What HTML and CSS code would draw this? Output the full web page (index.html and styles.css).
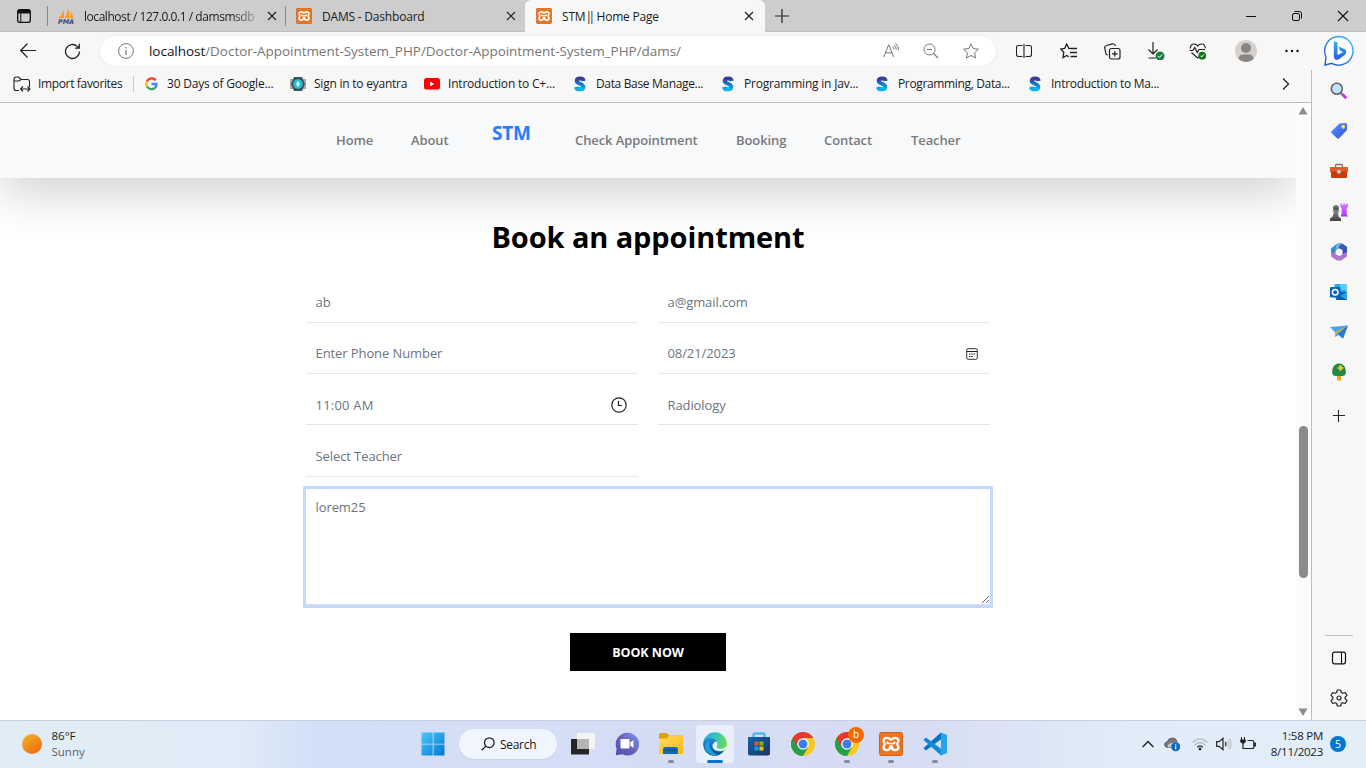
FILE: index.html
```html
<!DOCTYPE html>
<html lang="en">
<head>
<meta charset="utf-8">
<title>STM|| Home Page</title>
<link rel="stylesheet" href="styles.css">
</head>
<body>
<svg class="defs" width="0" height="0" aria-hidden="true">
  <defs>
    <linearGradient id="gS" x1="0" y1="0" x2="0" y2="1"><stop offset="0" stop-color="#3a3a9c"/><stop offset=".5" stop-color="#1478c8"/><stop offset="1" stop-color="#00b4f0"/></linearGradient>
    <linearGradient id="gBing" x1="1" y1="0" x2="0" y2="1"><stop offset="0" stop-color="#35c4f0"/><stop offset="1" stop-color="#2450d8"/></linearGradient>
    <linearGradient id="gB" x1="0" y1="0" x2="0" y2="1"><stop offset="0" stop-color="#2fb8f2"/><stop offset="1" stop-color="#2a58e6"/></linearGradient>
    <linearGradient id="gSun" x1="0" y1="0" x2=".7" y2="1"><stop offset="0" stop-color="#f0b92e"/><stop offset="1" stop-color="#f26a0c"/></linearGradient>
    <linearGradient id="gWin" x1="0" y1="0" x2="1" y2="1"><stop offset="0" stop-color="#4cc8f8"/><stop offset="1" stop-color="#0078d0"/></linearGradient>
    <linearGradient id="gChat" x1="0" y1="1" x2="1" y2="0"><stop offset="0" stop-color="#4c4eb0"/><stop offset=".5" stop-color="#6b60bd"/><stop offset="1" stop-color="#7a9af0"/></linearGradient>
    <linearGradient id="gFold" x1="0" y1="0" x2="1" y2="1"><stop offset="0" stop-color="#ffdc62"/><stop offset="1" stop-color="#fbb80c"/></linearGradient>
    <linearGradient id="gEdgeA" x1="0" y1="0" x2="1" y2=".3"><stop offset="0" stop-color="#2aa6dc"/><stop offset=".55" stop-color="#35c2c0"/><stop offset="1" stop-color="#6bdc50"/></linearGradient>
    <linearGradient id="gEdgeB" x1="0" y1="0" x2="0" y2="1"><stop offset="0" stop-color="#1c8fd6"/><stop offset="1" stop-color="#0c4a94"/></linearGradient>
    <linearGradient id="gStore" x1="0" y1="0" x2="1" y2="1"><stop offset="0" stop-color="#1265ad"/><stop offset="1" stop-color="#1d3362"/></linearGradient>
    <linearGradient id="gTag" x1="0" y1="0" x2="1" y2="1"><stop offset="0" stop-color="#5a96ff"/><stop offset="1" stop-color="#2f50dc"/></linearGradient>
    <linearGradient id="gGrey" x1="0" y1="0" x2="0" y2="1"><stop offset="0" stop-color="#888"/><stop offset="1" stop-color="#404040"/></linearGradient>
    <linearGradient id="gRook" x1="0" y1="0" x2="0" y2="1"><stop offset="0" stop-color="#d77cff"/><stop offset="1" stop-color="#a838f0"/></linearGradient>
    <symbol id="close" viewBox="0 0 10 10"><path d="M1 1l8 8M9 1l-8 8" stroke="#222" stroke-width="1.2" fill="none"/></symbol>
    <symbol id="xampp" viewBox="0 0 24 24"><rect x=".5" y=".5" width="23" height="23" rx="2" fill="#ee7422" stroke="#c9601c"/><path d="M8 5.800c2.400 0 2.700 1.700 4 1.700s1.600-1.700 4-1.700c2.100 0 3.400 1.500 3.400 3.200 0 1.500-1.300 2-1.300 3s1.300 1.500 1.300 3c0 1.800-1.300 3.200-3.400 3.200-3 0-3-1.900-3-3.200 0-.8-.4-1.200-1-1.200s-1 .4-1 1.200c0 1.300 0 3.200-3 3.200-2.100 0-3.400-1.400-3.400-3.200 0-1.500 1.300-2 1.300-3S4.600 10.500 4.600 9c0-1.700 1.300-3.200 3.400-3.200z" fill="none" stroke="#fff" stroke-width="2.300"/><path d="M8.500 9.500v2h7v-2" fill="none" stroke="#fff" stroke-width="1.600"/></symbol>
    <symbol id="skill" viewBox="0 0 12 16"><path d="M9.700 5C9.300 1.900 3 1.700 2.700 4.900 2.500 8.200 9.400 7.300 9.300 11 9.200 14.300 2.600 14 2 11" fill="none" stroke="url(#gS)" stroke-width="4"/></symbol>
    <symbol id="chrome" viewBox="0 0 24 24"><circle cx="12" cy="12" r="12" fill="#fbc81e"/><path d="M1.600 6A12 12 0 0 0 12 24l5.200-9L12 12z" fill="#25a04a"/><path d="M1.600 6A12 12 0 0 1 22.400 6H12l-5.200 9z" fill="#e23b30"/><circle cx="12" cy="12" r="5.800" fill="#fff"/><circle cx="12" cy="12" r="4.500" fill="#3b7ded"/></symbol>
  </defs>
</svg>
<div class="screen">
  <header class="tabs">
    <div class="tab-menu"><svg width="16" height="16" viewBox="0 0 16 16"><rect x="1.700" y="1.700" width="12.600" height="12.600" rx="2" fill="none" stroke="#111" stroke-width="1.300"/><path d="M2 2h12v3.500H2z" fill="#111"/><path d="M4.800 5v9" stroke="#111"/></svg></div>
    <div class="tab tab-sep">
      <svg width="16" height="16" viewBox="0 0 16 16"><path d="M0 10Q4 8 5.500 2q1 4 .5 8zM6.500 10Q10 5 9.500 0q3 5 1.500 10zM11.500 10q1.500-3 .8-7Q15 6 15.500 10z" fill="#f59d2c"/><text class="pma" x="0" y="15.500" textLength="16">PMA</text></svg>
      <span class="tab-label t1">localhost / 127.0.0.1 / damsmsdb</span>
      <svg width="10" height="10"><use href="#close"/></svg>
    </div>
    <div class="tab tab-sep tab-two">
      <svg width="16" height="16"><use href="#xampp"/></svg>
      <span class="tab-label t2">DAMS - Dashboard</span>
      <svg width="10" height="10"><use href="#close"/></svg>
    </div>
    <div class="tab active">
      <svg width="16" height="16"><use href="#xampp"/></svg>
      <span class="tab-label t3">STM<span class="bars">||</span> Home Page</span>
      <svg width="10" height="10"><use href="#close"/></svg>
    </div>
    <svg class="new-tab" width="14" height="14" viewBox="0 0 14 14"><path d="M7 0v14M0 7h14" stroke="#222" stroke-width="1.200"/></svg>
    <div class="window-buttons">
      <svg width="12" height="12" viewBox="0 0 12 12"><path d="M1 6.500h10" stroke="#111"/></svg>
      <svg width="12" height="12" viewBox="0 0 12 12"><rect x="1.500" y="3.500" width="7" height="7" rx="1.500" fill="none" stroke="#111"/><path d="M3.500 1.500h5q2 0 2 2v5" fill="none" stroke="#111"/></svg>
      <svg width="12" height="12" viewBox="0 0 12 12"><path d="M1 1l10 10M11 1L1 11" stroke="#111" stroke-width="1.100"/></svg>
    </div>
  </header>

  <div class="toolbar">
    <svg class="back" width="16" height="16" viewBox="0 0 16 16"><path d="M16 7.500H.8M7.500.5L.7 7.500l6.800 7" fill="none" stroke="#222" stroke-width="1.200"/></svg>
    <svg class="reload" width="17" height="17" viewBox="0 0 17 17"><path d="M15.500 8.500a7 7 0 1 1-2.200-5.100L15 5M15.300.8V5.200H11" fill="none" stroke="#222" stroke-width="1.300"/></svg>
    <div class="address">
      <svg class="info" width="16" height="16" viewBox="0 0 16 16"><circle cx="8" cy="8" r="7.400" fill="none" stroke="#777"/><path d="M8 7v5M8 4v1.500" stroke="#777" stroke-width="1.200"/></svg>
      <span class="url"><b>localhost</b>/Doctor-Appointment-System_PHP/Doctor-Appointment-System_PHP/dams/</span>
      <div class="address-icons">
        <svg width="16" height="16" viewBox="0 0 16 16"><path d="M.7 14L5.500 2h.6L10.500 14M2.500 9.800h6.500M9.500 3.500q1.500 1.200 1.500 3M11 1.800q2.300 2 2.300 5M12.500.3Q15.500 3 15.500 7" fill="none" stroke="#777"/></svg>
        <svg width="16" height="16" viewBox="0 0 16 16"><circle cx="6.500" cy="6.500" r="5.500" fill="none" stroke="#777"/><path d="M4 6.500h5M10.500 10.500l4.500 4.500" stroke="#777" stroke-width="1.100"/></svg>
        <svg width="16" height="16" viewBox="0 0 16 16"><path d="M8 .8l2.200 4.700 5.200.7-3.800 3.600 1 5.200L8 12.500 3.400 15l1-5.200L.6 6.200l5.200-.7z" fill="none" stroke="#777"/></svg>
      </div>
    </div>
    <div class="tools">
      <svg width="16" height="16" viewBox="0 0 16 16"><path d="M6.500 2.500h-4q-2 0-2 2v7q0 2 2 2h4M9.500 2.500h4q2 0 2 2v7q0 2-2 2h-4M8 1v14" fill="none" stroke="#222" stroke-width="1.100"/></svg>
      <svg width="17" height="16" viewBox="0 0 17 16"><path d="M11 5.600L8.800 5.300 6.700 1 4.700 5.300.6 6l3.200 3.200L3 14.600l3.800-2.100 2 1.300M9.500 5.500H17M10 9.500h7M10.500 13.500H17" fill="none" stroke="#222" stroke-width="1.300"/></svg>
      <svg class="collections" width="17" height="17" viewBox="0 0 17 17"><rect x="5.500" y="5.500" width="10.500" height="10.500" rx="2" fill="none" stroke="#222" stroke-width="1.200"/><path d="M10.800 8v5.600M8 10.800h5.600M3.800 12Q2 12 1.800 10L.7 5Q.5 3 2.500 2.500L8.500.8q2.200-.4 3 2.200" fill="none" stroke="#222" stroke-width="1.200"/></svg>
      <svg class="download" width="18" height="18" viewBox="0 0 18 18"><path d="M6 0v12M1.500 7.500L6 12l4.500-4.500M1.500 16H9" fill="none" stroke="#222" stroke-width="1.200"/><circle cx="13" cy="14" r="4.500" fill="#1e8040"/><path d="M11 14l1.500 1.500 2.500-3" fill="none" stroke="#fff"/></svg>
      <svg width="18" height="17" viewBox="0 0 18 17"><path d="M1.300 5.500Q1.500 1 5 1q2.500 0 3.700 2Q10 1 12.600 1q3.400 0 3.700 4.200M.5 7.500H4l1.800-3L8.200 9.500 10 6.500h6M2.500 9.500l6 5.500 1.500-1.200" fill="none" stroke="#222" stroke-width="1.200"/><circle cx="13.200" cy="12.700" r="3.900" fill="#127a12"/><path d="M11.500 12.700l1.200 1.300 2.300-2.500" fill="none" stroke="#fff"/></svg>
      <svg width="22" height="22" viewBox="0 0 22 22"><circle cx="11" cy="11" r="11" fill="#d4d1ce"/><circle cx="11" cy="8" r="5" fill="#8a8580"/><path d="M3.500 19Q4 14.500 8 14.500h6q4 0 4.500 4.500A11 11 0 0 1 3.500 19z" fill="#8a8580"/></svg>
      <svg width="16" height="4" viewBox="0 0 16 4"><circle cx="2.500" cy="2" r="1.200" fill="#111"/><circle cx="8" cy="2" r="1.200" fill="#111"/><circle cx="13.500" cy="2" r="1.200" fill="#111"/></svg>
    </div>
    <svg class="bing" width="32" height="32" viewBox="0 0 32 32"><path d="M16 1.500a14.300 14.300 0 1 1-7.200 26.800L2 30l1-8.200A14.300 14.300 0 0 1 16 1.500z" fill="#fff" stroke="url(#gBing)" stroke-width="1.400"/><path d="M10.800 6l3.700 1.500V20L20 17.300l-3-1.700-1.500-4 6 2.500q2.500 1.300 1.500 4-.5 1.600-2 2.500l-5.500 3.800q-1.700.8-3.200 0-1.500-.8-1.500-2.800z" fill="url(#gB)"/></svg>
  </div>

  <div class="middle">
    <div class="main">
      <div class="bookmarks">
        <div class="bm bm-import"><svg width="18" height="16" viewBox="0 0 18 16"><path d="M6 14.500H3q-2 0-2-2v-9Q1 1 3 1h2.500L8 3.500h6.500q2 0 2 2V11M1 5h5l2-1.500M7.500 13h9.500M10 10.500L7.500 13l2.500 2.500M14.500 10.500L17 13l-2.500 2.500" fill="none" stroke="#222" stroke-width="1.100"/></svg><span>Import favorites</span></div>
        <div class="bm bm-google"><svg width="13" height="14" viewBox="0 0 13 14"><path d="M10.800 3.300A5.200 5.200 0 0 0 2 4.500" stroke="#ea4335" stroke-width="2.300" fill="none"/><path d="M2 4.500a5.300 5.300 0 0 0 0 5" stroke="#fbbc05" stroke-width="2.300" fill="none"/><path d="M2 9.500a5.200 5.200 0 0 0 8 1.300" stroke="#34a853" stroke-width="2.300" fill="none"/><path d="M6.500 7h5q0 2.400-1.700 4" stroke="#4285f4" stroke-width="2.300" fill="none"/></svg><span>30 Days of Google...</span></div>
        <div class="bm bm-yantra"><svg width="16" height="16" viewBox="0 0 16 16"><path d="M0 3h16v10H0z" fill="#aaa"/><path d="M4 1h8l3 7-3 7H4L1 8z" fill="#3e5159"/><circle cx="8" cy="8" r="4.800" fill="#29bbdc"/><path d="M8 4.500L6 8l2 3.500L10 8z" fill="#c6f2fa"/></svg><span>Sign in to eyantra</span></div>
        <div class="bm bm-youtube"><svg width="16" height="12" viewBox="0 0 16 12"><rect width="16" height="11.500" rx="2.500" fill="#f00"/><path d="M6.200 3.500v4.800l4.200-2.400z" fill="#fff"/></svg><span>Introduction to C+...</span></div>
        <div class="bm bm-data"><svg width="12" height="16"><use href="#skill"/></svg><span>Data Base Manage...</span></div>
        <div class="bm bm-java"><svg width="12" height="16"><use href="#skill"/></svg><span>Programming in Jav...</span></div>
        <div class="bm bm-prog"><svg width="12" height="16"><use href="#skill"/></svg><span>Programming, Data...</span></div>
        <div class="bm bm-intro"><svg width="12" height="16"><use href="#skill"/></svg><span>Introduction to Ma...</span></div>
        <svg class="more" width="8" height="12" viewBox="0 0 8 12"><path d="M1 .5L6.500 6 1 11.500" fill="none" stroke="#222" stroke-width="1.300"/></svg>
      </div>
      <div class="viewport">
        <div class="page">
          <nav class="nav">
            <a class="n1">Home</a><a class="n2">About</a><a class="brand">STM</a><a class="n3">Check Appointment</a><a class="n4">Booking</a><a class="n5">Contact</a><a class="n6">Teacher</a>
          </nav>
          <section class="booking">
            <h1>Book an appointment</h1>
            <div class="fields">
              <div class="field"><span>ab</span></div>
              <div class="field"><span>a@gmail.com</span></div>
              <div class="field"><span>Enter Phone Number</span></div>
              <div class="field"><span>08/21/2023</span><svg class="date-icon" width="12" height="12" viewBox="0 0 12 12"><rect x=".7" y=".7" width="10.600" height="10.600" rx="1.500" fill="none" stroke="#333"/><path d="M1 3.500h10" stroke="#222"/><path d="M3 6h6.500M3 8.500h4" stroke="#222" stroke-width="1.200" stroke-dasharray="1.500 .7"/></svg></div>
              <div class="field lower"><span class="time">11:00 AM</span><svg class="time-icon" width="16" height="16" viewBox="0 0 16 16"><circle cx="8" cy="8" r="7.200" fill="none" stroke="#222" stroke-width="1.200"/><path d="M7.500 4v4.500H11" fill="none" stroke="#222" stroke-width="1.200"/></svg></div>
              <div class="field lower"><span>Radiology</span></div>
              <div class="field"><span>Select Teacher</span></div>
            </div>
            <textarea class="message" spellcheck="false">lorem25</textarea>
            <button class="submit">BOOK NOW</button>
          </section>
        </div>
        <div class="scrollbar">
          <svg width="10" height="8" viewBox="0 0 10 8"><path d="M5 0l4.500 7.500h-9z" fill="#8b8b8b"/></svg>
          <div class="thumb"></div>
          <svg width="10" height="8" viewBox="0 0 10 8"><path d="M5 8L.5 .5h9z" fill="#8b8b8b"/></svg>
        </div>
      </div>
    </div>
    <aside class="sidebar">
      <div class="slot"><svg width="18" height="18" viewBox="0 0 18 18"><path d="M10.500 10.500L13 13" stroke="#777" stroke-width="2"/><path d="M12.300 12.300l4 4" stroke="#c33bf0" stroke-width="3"/><circle cx="6.800" cy="6.800" r="5.500" fill="#bfe4fb" stroke="#666" stroke-width="1.600"/></svg></div>
      <div class="slot"><svg width="18" height="18" viewBox="0 0 18 18"><path d="M9.500 1.500l6-.5q1.500 0 1.500 1.500V8L8.800 16.500Q8 17 7 16.200L1.500 11Q.8 10 1.500 9.200z" fill="url(#gTag)"/><circle cx="13.200" cy="4.800" r="1.400" fill="#fff" stroke="#fbcf3c" stroke-width="1.200"/></svg></div>
      <div class="slot"><svg width="18" height="18" viewBox="0 0 18 18"><path d="M5.500 6V3.500q0-1 1-1h5q1 0 1 1V6" fill="none" stroke="#777" stroke-width="1.300"/><path d="M0 5h18v5H0z" fill="#e45a24"/><path d="M1 9.500h16V15q0 1-1 1H2q-1 0-1-1z" fill="#c43c0c"/><circle cx="9" cy="9.700" r="2" fill="#ccc"/></svg></div>
      <div class="slot"><svg width="18" height="18" viewBox="0 0 18 18"><path d="M10.300.5h1.700v1.500h1.200V.5h1.800v1.500h1.200V.5H18V4l-1.300 1v6l1.300 2.500h-7.500L11.600 11V5l-1.300-1z" fill="url(#gRook)"/><circle cx="6" cy="5" r="3" fill="url(#gGrey)"/><path d="M2.800 7.500h6.400v1.500H8l.5 4.500 2.500 2v2.500H0V15.500l2.700-2L4 9H2.800z" fill="url(#gGrey)"/></svg></div>
      <div class="slot"><svg width="18" height="18" viewBox="0 0 18 18"><path d="M1 5.500L6 1.500 11.500 1 8.500 5.500 5.500 8v4L1 13z" fill="#3f87ce"/><path d="M6 1.500L8 .5h4l5 3.300V13l-4.500-2V7L8 5z" fill="#3a55ba"/><path d="M1 8.500l5 3 3.500 1.500L17 9v4.500l-6 4H7l-6-4z" fill="#ae77cf"/><path d="M6 1.500Q8 .3 11 .8L8 5.500 5.500 7z" fill="#61b9e5"/><path d="M9 5.500L12 7.200v3.600L9 12.500l-3-1.700V7.200z" fill="#f7f7f7"/></svg></div>
      <div class="slot"><svg width="18" height="18" viewBox="0 0 18 18"><rect x="4.500" y="1" width="12" height="14" rx="1" fill="#28a8e8"/><path d="M10 1h6.500v6H10z" fill="#50d0f8"/><path d="M7 9h10v8H6z" fill="#0b5fb0"/><path d="M17 9v8l-7-4z" fill="#2ba4e6"/><rect x="0" y="4" width="10.500" height="10.500" rx="1" fill="#0868b8"/><circle cx="5.200" cy="9.200" r="2.800" fill="none" stroke="#fff" stroke-width="1.500"/></svg></div>
      <div class="slot"><svg width="18" height="18" viewBox="0 0 18 18"><path d="M0 4l18-1.500-5 13L8.500 12 5 14V9z" fill="#42a6ef"/><path d="M18 2.500L5 9v5l1.500-3.500z" fill="#f6aa24"/><path d="M18 2.500l-5 13-5-4.500z" fill="#247cd2"/></svg></div>
      <div class="slot"><svg width="18" height="18" viewBox="0 0 18 18"><path d="M7 12h4v5.500H7z" fill="#f3a61e"/><path d="M9 .5q5 0 6.500 5.500 1.500 7-3 7h-7q-4.500 0-3-7Q4 .5 9 .5z" fill="#238a45"/><path d="M10.500 2v6M7.500 5h6" stroke="#f9c82f" stroke-width="1.500"/><circle cx="10.500" cy="5" r="1.900" fill="#f9c82f"/></svg></div>
      <div class="slot plus"><svg width="12" height="12" viewBox="0 0 12 12"><path d="M5.500 0v12M0 5.500h12" stroke="#222" stroke-width="1.100"/></svg></div>
      <div class="side-bottom">
        <div class="slot"><svg width="16" height="14" viewBox="0 0 16 14"><rect x="1.500" y="1.200" width="13" height="11.600" rx="2" fill="none" stroke="#111" stroke-width="1.200"/><path d="M10.500 1v12" stroke="#111" stroke-width="1.100"/></svg></div>
        <div class="slot"><svg width="18" height="18" viewBox="0 0 18 18"><path d="M7.300 1h3.400l.6 2.500 1.500.8 2.400-.8L17 6.400l-1.900 1.800v1.600L17 11.600l-1.800 2.900-2.400-.8-1.500.8-.6 2.500H7.300l-.6-2.500-1.500-.8-2.400.8L1 11.600l1.900-1.800V8.200L1 6.400l1.800-2.900 2.400.8 1.500-.8z" fill="none" stroke="#222" stroke-width="1.200" stroke-linejoin="round"/><circle cx="9" cy="9" r="2" fill="none" stroke="#222" stroke-width="1.200"/></svg></div>
      </div>
    </aside>
  </div>

  <footer class="taskbar">
    <div class="weather"><svg width="20" height="20" viewBox="0 0 20 20"><circle cx="10" cy="10" r="10" fill="url(#gSun)"/></svg><div class="weather-text"><span class="w1">86°F</span><span class="w2">Sunny</span></div></div>
    <div class="apps">
      <div class="app start"><svg width="24" height="24" viewBox="0 0 24 24"><path d="M.5.5h11.200v11.200H.5zM12.500.5h11v11.200h-11zM.5 12.500h11.200v11H.5zM12.500 12.500h11v11h-11z" fill="url(#gWin)"/></svg></div>
      <div class="search"><svg width="14" height="14" viewBox="0 0 14 14"><circle cx="8.300" cy="5.700" r="4.800" fill="none" stroke="#222" stroke-width="1.300"/><path d="M4.900 9.100L.7 13.300" stroke="#222" stroke-width="1.300"/></svg><span>Search</span></div>
      <div class="app taskview"><svg width="24" height="24" viewBox="0 0 24 24"><path d="M6 1h18v16H6z" fill="#f4f4f4"/><path d="M0 7h18v15.500H0z" fill="#252525"/><path d="M6 7h12v10H6z" fill="#b5b5b5"/></svg></div>
      <div class="app"><svg width="24" height="24" viewBox="0 0 24 24"><path d="M12 .8A11.400 11.400 0 1 1 7.500 22.300L.8 23.200l.8-6.500A11.400 11.400 0 0 1 12 .8z" fill="url(#gChat)"/><rect x="5.500" y="7" width="9" height="9.500" rx="1" fill="#fff"/><path d="M15.200 10.500L18.500 8v8l-3.300-2.500z" fill="#fff"/></svg></div>
      <div class="app dot"><svg width="24" height="24" viewBox="0 0 24 24"><path d="M0 2.500Q0 1 1.500 1H8l2 2.500h13q1 0 1 1V8H0z" fill="#e0a008"/><path d="M0 6.500h8l2-3h14V22H0z" fill="url(#gFold)"/><path d="M4 22v-5q0-2 2-2h11q2 0 2 2v5z" fill="#0f6cbd"/><path d="M6 17.500h11v1.200H6z" fill="#0a4a90"/></svg></div>
      <div class="app current"><svg width="24" height="24" viewBox="0 0 24 24"><circle cx="12" cy="12" r="11.800" fill="url(#gEdgeA)"/><path d="M.2 12q1-5.700 7-5.800 5.300.1 6.300 4.200Q8.500 10.500 9.500 15q2 6 11.500 3.500Q17 24 11 23.800 1 23 .2 12z" fill="url(#gEdgeB)"/><path d="M2 17Q.5 10.500 7 8q-2 6 1.500 10.500Q11 22 15 23 7 25 2 17z" fill="#1aa0dc"/><path d="M13 9.500q2.500 1.500 1 4.300-1 2 1.500 2.800 4 1 8-2l.5 1.700Q22 19 17.500 19.200 10 19 9.500 14 9.500 11 13 9.500z" fill="#eaf0fa"/></svg></div>
      <div class="app"><svg width="24" height="24" viewBox="0 0 24 24"><path d="M6.500 6V2.500Q6.500 1.500 7.500 1.500h9q1 0 1 1V6" fill="none" stroke="#38b4ee" stroke-width="2"/><path d="M1 5h22v16.500q0 2-2 2H3q-2 0-2-2z" fill="url(#gStore)"/><path d="M7.500 9.500h4v4h-4z" fill="#f25022"/><path d="M12.500 9.500h4v4h-4z" fill="#7fba00"/><path d="M7.500 14.500h4v4h-4z" fill="#00a4ef"/><path d="M12.500 14.500h4v4h-4z" fill="#ffb900"/></svg></div>
      <div class="app"><svg width="24" height="24"><use href="#chrome"/></svg></div>
      <div class="app dot"><svg width="24" height="24"><use href="#chrome"/></svg><span class="profile">b</span></div>
      <div class="app dot"><svg width="24" height="24"><use href="#xampp"/></svg></div>
      <div class="app dot"><svg width="24" height="24" viewBox="0 0 24 24"><path d="M18 .5v6.700L3 18.500.3 16.200z" fill="#0a73bd"/><path d="M18 23.500v-6.700L3 5.500.3 7.800z" fill="#138cd8"/><path d="M18 .5L24 3v18l-6 2.500z" fill="#25a5ee"/></svg></div>
    </div>
    <div class="tray">
      <svg class="chev" width="12" height="8" viewBox="0 0 12 8"><path d="M.7 7L6 1.500 11.300 7" fill="none" stroke="#222" stroke-width="1.400"/></svg>
      <svg class="cloud" width="17" height="16" viewBox="0 0 17 16"><path d="M4 11.500Q.5 11.300.5 8.500.7 6 3.300 5.700 4.500 2 8.500 2q4 .2 4.700 4l-4 5.500z" fill="#777" stroke="#444" stroke-width=".7"/><path d="M4 11.500q-1.500-3 3-4.500l7-1 .5 5.500z" fill="#c9c9c9"/><circle cx="11.700" cy="10.800" r="4.500" fill="#0f6cbd"/><path d="M11.700 10v3.300M11.700 8v1.200" stroke="#fff" stroke-width="1.100"/></svg>
      <svg class="wifi" width="16" height="14" viewBox="0 0 16 14"><path d="M.7 5.500q7.300-7.500 14.600 0M3 8q5-5 10 0" fill="none" stroke="#aeb5ba" stroke-width="1.200"/><path d="M5.200 10.200q2.800-2.700 5.600 0" fill="none" stroke="#222" stroke-width="1.300"/><circle cx="8" cy="12" r="1.400" fill="#222"/></svg>
      <svg class="sound" width="16" height="14" viewBox="0 0 16 14"><path d="M.7 4.700h2.500L7 1.300v11.400L3.200 9.300H.7zM9.300 4.800q1.200 2.200 0 4.400" fill="none" stroke="#222" stroke-width="1.200"/><path d="M11.500 3q2 4 0 8M13.500 1.500q3 5.500 0 11" fill="none" stroke="#b5bcc1" stroke-width="1.100"/></svg>
      <svg class="battery" width="17" height="14" viewBox="0 0 17 14"><path d="M1.500 0v3M4.500 0v3" stroke="#222"/><path d="M.2 2.500h5.600V5L4 6.500H2L.2 5z" fill="#222"/><path d="M3 6v5.500h9.500q1.300 0 1.300-1.300V4.800q0-1.300-1.300-1.300H7.500" fill="none" stroke="#222" stroke-width="1.200"/><path d="M15 5.500v4" stroke="#222" stroke-width="1.800"/></svg>
      <div class="clock"><span class="c1">1:58 PM</span><span class="c2">8/11/2023</span></div>
      <span class="count">5</span>
    </div>
  </footer>
</div>
</body>
</html>
```

FILE: styles.css
```css
* { box-sizing: border-box; }
body { margin: 0; font-family: "Open Sans", "Noto Sans", sans-serif; font-size: 12px; color: #1b1b1b; }
svg { display: block; flex: none; }
.defs { position: absolute; }
.screen { width: 1366px; height: 768px; display: flex; flex-direction: column; overflow: hidden; background: #f7f7f7; white-space: nowrap; }

.tabs { height: 32px; flex: none; display: flex; background: #cdcdcd; box-shadow: inset 0 -1px #bfbfbf; }
.tab-menu { width: 48px; display: flex; align-items: center; padding-left: 16px; }
.tab { width: 239px; display: flex; align-items: center; gap: 10px; padding: 0 11px; }
.tab-sep { background: linear-gradient(#888, #888) 0 6px / 1px 20px no-repeat; margin-left: -1px; padding-right: 9px; }
.tab-two { width: 240px; }
.active { width: 240px; background: #f7f7f7; border-radius: 6px 6px 0 0; }
.tab-label { flex: 1; }
.t1 { letter-spacing: -.45px; mask-image: linear-gradient(90deg, #000 85%, rgba(0,0,0,.2)); }
.t2 { letter-spacing: -.2px; }
.t3 { letter-spacing: -.2px; }
.bars { letter-spacing: -3.500px; margin-right: 2px; }
.pma { font: italic 900 6.500px "DejaVu Sans", sans-serif; fill: #47477c; }
.new-tab { margin: 9px 0 0 10px; }
.window-buttons { margin-left: auto; display: flex; align-items: center; gap: 34px; padding-right: 17px; }

.toolbar { height: 38px; flex: none; display: flex; align-items: center; }
.back { margin-left: 20px; }
.reload { margin-left: 28px; }
.address { margin-left: 19px; width: 896px; height: 30px; border-radius: 15px; background: #fff; box-shadow: 0 0 2px rgba(0,0,0,.12); display: flex; align-items: center; padding: 0 17px 0 18px; }
.url { margin-left: 15px; font-size: 13.500px; letter-spacing: -.04px; color: #767676; }
.url b { font-weight: 400; color: #111; }
.address-icons { margin-left: auto; display: flex; gap: 24px; }
.tools { margin-left: 20px; width: 284px; display: flex; justify-content: space-between; align-items: center; }
.collections { margin-right: -2px; }
.download { margin-right: -3px; }
.bing { margin-left: 23px; }

.middle { flex: 1; min-height: 0; display: flex; }
.main { width: 1311px; display: flex; flex-direction: column; }
.bookmarks { height: 33px; flex: none; display: flex; align-items: center; padding: 0 0 4px 13px; border-bottom: 1px solid #bdbdbd; }
.bm { display: flex; align-items: center; gap: 10px; letter-spacing: -.2px; }
.bm span { margin-top: -1px; }
.bm-import { width: 121px; gap: 7px; border-right: 1px solid #c8c8c8; letter-spacing: -.35px; }
.bm-google { width: 156px; padding-left: 11px; gap: 9px; }
.bm-yantra { width: 134px; gap: 8px; letter-spacing: -.23px; }
.bm-youtube { width: 150px; gap: 8px; }
.bm-data { width: 148px; letter-spacing: -.35px; }
.bm-java { width: 154px; }
.bm-prog { width: 153px; letter-spacing: -.35px; }
.bm-intro { width: 140px; letter-spacing: -.28px; }
.more { margin-left: auto; margin-right: 21px; }

.viewport { flex: 1; display: flex; min-height: 0; }
.page { width: 1296px; background: #fff; overflow: hidden; }
.nav { height: 75px; background: #f8f9fb; display: flex; align-items: center; padding: 0 0 2px 336px; box-shadow: 0 16px 48px rgba(0,0,0,.175); color: #797a7b; font-weight: 600; font-size: 13px; letter-spacing: -.1px; }
.n1 { width: 75px; }
.n2 { width: 81px; }
.brand { width: 83px; font-size: 19px; font-weight: 700; letter-spacing: -.25px; color: #267dff; margin-bottom: 13px; }
.n3 { width: 161px; }
.n4 { width: 88px; }
.n5 { width: 87px; }
.booking { display: flex; flex-direction: column; align-items: center; padding-top: 39px; }
h1 { margin: 0; font-size: 29px; line-height: 40px; font-weight: 700; letter-spacing: -.1px; color: #000; }
.fields { width: 684px; margin-top: 14px; display: grid; grid-template-columns: 332px 332px; gap: 0 20px; grid-template-rows: 52px 51px 51px 52px; }
.field { border-bottom: 1px solid #e6e6e6; display: flex; align-items: center; justify-content: space-between; padding: 10px 10px 0 9.500px; font-size: 13px; letter-spacing: -.09px; color: #6c757d; }
.date-icon { margin: 2px 2px 0 0; }
.time-icon { margin-right: 1px; }
.time { letter-spacing: .2px; }
.lower { padding-top: 12px; }
.message { display: block; width: 684px; height: 116px; margin: 12px 0 0; padding: 9px 9.500px; border: 0; border-bottom: 1px solid #ddd; outline: none; box-shadow: 0 0 0 3px #c2daff; font: 13px/19px "Open Sans", sans-serif; letter-spacing: -.09px; color: #6c757d; }
.submit { width: 156px; height: 38px; margin-top: 28px; border: 0; background: #000; color: #fff; font: 700 12.500px "Open Sans", sans-serif; letter-spacing: -.05px; padding: 0; }
.scrollbar { width: 15px; background: #fcfcfc; display: flex; flex-direction: column; align-items: center; padding: 4px 1px 4px 0; }
.thumb { width: 9px; height: 152px; border-radius: 5px; background: #8b8b8b; margin: 311px 0 auto; }

.sidebar { width: 55px; border-left: 1px solid #bdbdbd; padding-top: 1px; display: flex; flex-direction: column; align-items: center; }
.slot { height: 40.200px; flex: none; display: flex; align-items: center; }
.plus { height: 46px; }
.side-bottom { margin-top: auto; width: 28px; border-top: 1px solid #bdbdbd; padding: 2px 0; display: flex; flex-direction: column; align-items: center; }

.taskbar { height: 48px; flex: none; border-top: 1px solid #c7d0dc; display: flex; background: linear-gradient(90deg, #e1edf6 0, #e0ebf7 240px, #d3e0f7 310px, #d4ddf5 620px, #d6dcf2 900px, #e1ecf8 1120px, #e2eef8 100%); }
.weather { width: 414px; display: flex; align-items: center; padding: 0 0 1px 22px; gap: 9.500px; }
.weather-text { display: flex; flex-direction: column; line-height: 16px; font-size: 11.500px; }
.w2 { color: #59636d; }
.apps { display: flex; align-items: center; padding-bottom: 1px; }
.app { position: relative; width: 38px; height: 38px; margin-right: 6px; display: flex; align-items: center; justify-content: center; border-radius: 4px; }
.start { margin-right: 5px; }
.search { width: 98px; height: 30px; margin: 0 7px 0 2px; border-radius: 15px; background: #f1f5fd; box-shadow: 0 1px 1px #c8cfe2; display: flex; align-items: center; gap: 5px; padding-left: 22px; letter-spacing: -.3px; }
.current { background: #eaf0fb; }
.current::after, .dot::after { content: ""; position: absolute; bottom: 0; left: 16px; width: 6px; height: 3px; border-radius: 2px; background: #858b96; }
.current::after { left: 11px; width: 16px; background: #0873cc; }
.profile { position: absolute; left: 20px; top: 2px; width: 16px; height: 16px; border-radius: 8px; background: #f06a00; color: #fff; font-size: 10px; line-height: 15px; text-align: center; }
.tray { margin-left: auto; display: flex; align-items: center; padding: 0 20px 1px 0; }
.cloud { margin-left: 10px; }
.wifi { margin-left: 11px; }
.sound { margin-left: 8px; }
.battery { margin-left: 8px; }
.clock { width: 66px; display: flex; flex-direction: column; text-align: right; line-height: 16px; font-size: 11.500px; letter-spacing: -.25px; }
.count { margin-left: 7px; width: 16px; height: 16px; border-radius: 8px; background: #0078d4; color: #fff; text-align: center; line-height: 16px; font-size: 10.500px; }
```
